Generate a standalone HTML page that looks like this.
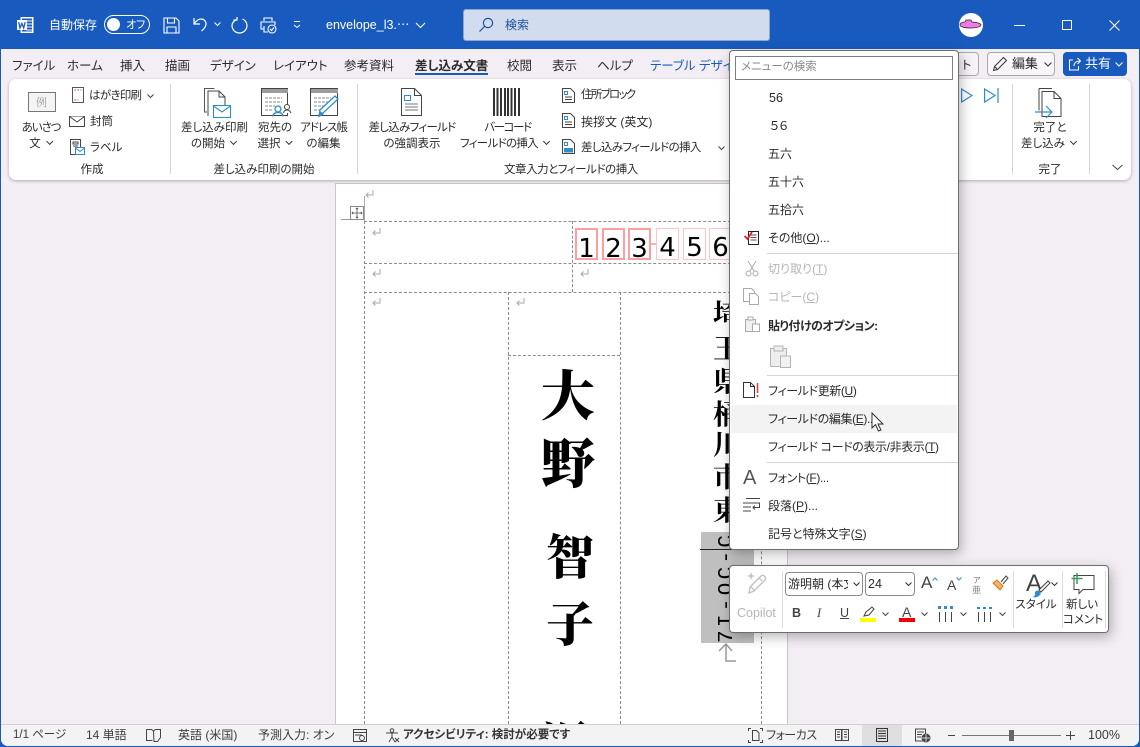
<!DOCTYPE html>
<html lang="ja"><head><meta charset="utf-8"><title>Word</title>
<style>
*{box-sizing:border-box}
html,body{margin:0;padding:0;width:1140px;height:747px;overflow:hidden;background:#185abd}
body{position:relative;font-family:"Liberation Sans","Noto Sans CJK JP",sans-serif;font-size:12px;color:#2b2b2b;font-feature-settings:"palt"}
.a{position:absolute}
.t{position:absolute;white-space:nowrap;line-height:16px;height:16px}
.c{text-align:center;transform:translateX(-50%)}
svg{position:absolute;overflow:visible}
.w{color:#fff}
.tab{font-size:12.5px;top:58px}
.rb{font-size:11.5px}
.m{font-size:12px;left:768px;color:#2b2b2b}
.f{letter-spacing:-.38px}
.dis{color:#b5b5b5}
.sep{position:absolute;background:#d6d6d6;width:1px}
.ms{position:absolute;left:767px;width:191px;height:1px;background:#d4d4d4}
.d{position:absolute;border:0 dashed #8c8c8c}
.h{border-top-width:1px}.v{border-left-width:1px}
.box{position:absolute;top:228px;width:23px;height:32px;font-family:"DejaVu Sans",sans-serif;font-size:26px;line-height:38px;text-align:center;color:#000;background:#fff}
.cal{position:absolute;font-family:"Noto Serif CJK SC","Noto Serif CJK JP",serif;font-weight:900;color:#000;line-height:1;white-space:nowrap}
.s{font-size:12px;top:727px;color:#3c3c3c}
.ch{display:inline-block;width:5px;height:5px;border-right:1px solid #333;border-bottom:1px solid #333;transform:rotate(45deg);margin:0 1px 3px 6px}
</style></head><body>

<!-- window background -->
<div class="a" style="left:1px;top:49px;width:1138px;height:697px;background:#f3edf4;border-radius:0 0 7px 7px"></div>

<!-- document page -->
<div class="a" style="left:335px;top:183px;width:453px;height:541px;background:#fff;border:1px solid #c9c6ca;border-bottom:0"></div>

<!-- title bar -->
<svg style="left:16px;top:16px" width="18" height="18" viewBox="0 0 18 18"><rect x="4.5" y="1" width="13" height="16" fill="#fff"/><rect x="6" y="2.5" width="10" height="13" fill="#185abd"/><path d="M10 5h6M10 8h6M10 11h6M10 14h6" stroke="#fff"/><rect x="1" y="4" width="10" height="10" fill="#fff"/><path d="M2.7 6l1.3 6 1.900-4.600L7.700 12 9.200 6" fill="none" stroke="#185abd" stroke-width="1.300"/></svg>
<div class="t w" style="left:49px;top:17px;font-size:12px">自動保存</div>
<div class="a" style="left:104px;top:15px;width:46px;height:19px;border:1px solid #fff;border-radius:10px"></div>
<div class="a" style="left:107px;top:18px;width:13px;height:13px;background:#fff;border-radius:50%"></div>
<div class="t w" style="left:126px;top:17px;font-size:11px">オフ</div>
<svg style="left:163px;top:17px" width="17" height="17" fill="none" stroke="#fff" stroke-width="1.100"><path d="M1 1h12l3 3v12H1z"/><path d="M4.500 1v5h7V1M4 16v-6h9v6"/></svg>
<svg style="left:192px;top:16px" width="18" height="18" fill="none" stroke="#fff" stroke-width="1.200"><path d="M2 2v6h6"/><path d="M2 8c2-3 4-5 7-5 3 0 5 2.200 5 5s-2 5-4.500 7"/></svg>
<svg style="left:214px;top:22px" width="7" height="5" fill="none" stroke="#fff"><path d="M.5.500L3.500 3.500 6.500.5"/></svg>
<svg style="left:231px;top:16px" width="18" height="18" fill="none" stroke="#fff" stroke-width="1.200"><path d="M6 3.500C3 4.500 1 7 1 9.500a7.500 7.500 0 0 0 15 0c0-3-2-5.500-4.500-6.500M6 1v3H2.500"/></svg>
<svg style="left:260px;top:17px" width="18" height="18" fill="none" stroke="#fff" stroke-width="1.100"><path d="M4 4V1h8v3M4 12H1V5h14v3M4 9v6h4"/><circle cx="12" cy="12" r="4" fill="#185abd"/><path d="M10 12l1.500 1.500L14 10.500"/></svg>
<svg style="left:293px;top:21px" width="8" height="8" fill="none" stroke="#fff"><path d="M1 .5h6M1 4L4 6.500 7 4"/></svg>
<div class="t w" style="left:326px;top:17px;font-size:12.500px">envelope_l3.⋯</div>
<svg style="left:415px;top:22px" width="11" height="7" fill="none" stroke="#fff" stroke-width="1.100"><path d="M1 1l4.500 4.500L10 1"/></svg>
<div class="a" style="left:463px;top:9px;width:307px;height:32px;background:#d1dcee;border:1px solid #8ea6c8;border-radius:3px"></div>
<svg style="left:478px;top:17px" width="16" height="16" fill="none" stroke="#1a4f9f" stroke-width="1.200"><circle cx="10" cy="6" r="4.600"/><path d="M6.500 9.500L1.500 14.500"/></svg>
<div class="t" style="left:505px;top:17px;font-size:12px;color:#1f4e96">検索</div>
<div class="a" style="left:959px;top:13px;width:24px;height:24px;border-radius:50%;background:#fff"></div>
<svg style="left:959px;top:13px" width="24" height="24"><path d="M1 12c0-2 2-3 5-3l1-2h5l1 2c5 .5 9 1.500 9 3s-4 3-10 3-11-1-11-3z" fill="#ee7ae6" stroke="#222" stroke-width=".7"/></svg>
<div class="a" style="left:1014px;top:25px;width:11px;height:1px;background:#fff"></div>
<div class="a" style="left:1062px;top:20px;width:10px;height:10px;border:1px solid #fff"></div>
<svg style="left:1109px;top:20px" width="11" height="11" stroke="#fff"><path d="M.5.5l10 10M10.500.5l-10 10"/></svg>

<!-- tabs -->
<div class="t tab" style="left:12px">ファイル</div>
<div class="t tab" style="left:67px">ホーム</div>
<div class="t tab" style="left:120px">挿入</div>
<div class="t tab" style="left:165px">描画</div>
<div class="t tab" style="left:210px">デザイン</div>
<div class="t tab" style="left:273px">レイアウト</div>
<div class="t tab" style="left:344px">参考資料</div>
<div class="t tab" style="left:415px;font-weight:bold">差し込み文書</div>
<div class="a" style="left:415px;top:73px;width:73px;height:2px;background:#185abd"></div>
<div class="t tab" style="left:507px">校閲</div>
<div class="t tab" style="left:552px">表示</div>
<div class="t tab" style="left:597px">ヘルプ</div>
<div class="t tab" style="left:650px;color:#185abd">テーブル デザイン</div>

<!-- right of tabs -->
<div class="a" style="left:940px;top:52px;width:39px;height:24px;background:#f6f2f7;border:1px solid #a8a8a8;border-radius:4px"></div>
<div class="t" style="left:962px;top:57px;font-size:12px">ト</div>
<div class="a" style="left:987px;top:52px;width:68px;height:24px;background:#f8f6f9;border:1px solid #a8a8a8;border-radius:4px"></div>
<svg style="left:992px;top:56px" width="16" height="16" fill="none" stroke="#333"><path d="M1.500 14.500l1-4L11.500 1.500l3 3-9 9zM2.500 10.500l3 3"/></svg>
<div class="t" style="left:1012px;top:56px;font-size:13px">編集</div>
<svg style="left:1044px;top:62px" width="8" height="5" fill="none" stroke="#333"><path d="M.5.500L4 4 7.500.5"/></svg>
<div class="a" style="left:1063px;top:52px;width:64px;height:24px;background:#185abd;border-radius:4px"></div>
<svg style="left:1068px;top:57px" width="14" height="14" fill="none" stroke="#fff"><path d="M5 3H1.500v10h9V9M6 9c0-3 2-5 6-5M9.500 1L12.500 4l-3 3"/></svg>
<div class="t w" style="left:1085px;top:56px;font-size:13px">共有</div>
<svg style="left:1115px;top:62px" width="8" height="5" fill="none" stroke="#fff"><path d="M.5.500L4 4 7.500.5"/></svg>

<!-- ribbon -->
<div class="a" style="left:9px;top:79px;width:1122px;height:101px;background:#fff;border-radius:7px;box-shadow:0 1px 3px rgba(0,0,0,.28)"></div>
<div class="sep" style="left:170px;top:84px;height:90px"></div>
<div class="sep" style="left:357px;top:84px;height:90px"></div>
<div class="sep" style="left:1012px;top:84px;height:90px"></div>
<div class="sep" style="left:1089px;top:84px;height:90px"></div>

<!-- ribbon group 1 -->
<div class="a" style="left:28px;top:92px;width:28px;height:20px;background:#f4f4f4;border:1px solid #777"></div>
<div class="t" style="left:36px;top:94px;font-size:11px;color:#999;font-family:'Noto Serif CJK JP',serif">例</div>
<div class="t rb c" style="left:41px;top:120px;letter-spacing:-1.100px">あいさつ</div>
<div class="t rb c" style="left:41px;top:136px">文<span class="ch"></span></div>
<svg style="left:72px;top:87px" width="12" height="16"><rect x=".5" y=".5" width="11" height="15" fill="#fff" stroke="#555"/><path d="M2.500 3h7M2.500 13h4" stroke="#d33" stroke-dasharray="1.500 1.500"/></svg>
<div class="t rb" style="left:89px;top:88px;letter-spacing:-.7px">はがき印刷</div>
<svg style="left:147px;top:94px" width="7" height="5" fill="none" stroke="#444"><path d="M.5.500L3.500 3.500 6.500.5"/></svg>
<svg style="left:69px;top:116px" width="16" height="11" fill="#fff" stroke="#444"><rect x=".5" y=".5" width="15" height="10"/><path d="M.5.500L8 6 15.500.500"/></svg>
<div class="t rb" style="left:90px;top:114px">封筒</div>
<svg style="left:70px;top:139px" width="15" height="16" fill="none"><rect x=".5" y=".5" width="10" height="15" stroke="#444"/><path d="M3 3h5v2H3zM3 7h5" stroke="#444"/><rect x="5.500" y="8.500" width="9" height="7" fill="#fff" stroke="#2e8ecb"/><path d="M5.500 9l4.500 3.500L14.500 9" stroke="#2e8ecb"/></svg>
<div class="t rb" style="left:90px;top:140px">ラベル</div>
<div class="t rb c" style="left:92px;top:162px">作成</div>

<!-- group 2 -->
<svg style="left:204px;top:88px" width="28" height="30" fill="none"><path d="M3 24H.5V.5h10" stroke="#555"/><path d="M4 28V3h11l6 6v13" fill="#fff" stroke="#444"/><path d="M15 3v6h6" stroke="#444"/><rect x="9.500" y="17.500" width="17" height="12" fill="#fff" stroke="#2e8ecb" stroke-width="1.100"/><path d="M9.500 18l8.500 6 8.500-6" stroke="#2e8ecb" stroke-width="1.100"/></svg>
<div class="t rb c" style="left:214.500px;top:120px">差し込み印刷</div>
<div class="t rb c" style="left:214px;top:136px">の開始<span class="ch"></span></div>
<svg style="left:261px;top:88px" width="31" height="29" fill="none"><rect x=".5" y=".5" width="26" height="27" fill="#fff" stroke="#444"/><rect x="1" y="1" width="26" height="4" fill="#9d9d9d"/><path d="M4 10h17M4 14h17M4 18h10M4 22h8" stroke="#888" stroke-dasharray="3 1"/><circle cx="17" cy="21" r="3" fill="#fff" stroke="#2e8ecb" stroke-width="1.300"/><path d="M12 28.500c0-3 2-4 5-4s5 1 5 4" stroke="#2e8ecb" stroke-width="1.300"/><circle cx="26" cy="19" r="2.500" fill="#fff" stroke="#444"/><path d="M22.500 25c.5-2 2-3 3.500-3s3 1 4 3" stroke="#444" fill="#fff"/></svg>
<div class="t rb c" style="left:275px;top:120px">宛先の</div>
<div class="t rb c" style="left:275px;top:136px">選択<span class="ch"></span></div>
<svg style="left:310px;top:88px" width="30" height="30" fill="none"><rect x=".5" y=".5" width="27" height="27" fill="#fff" stroke="#444"/><rect x="1" y="1" width="27" height="4" fill="#9d9d9d"/><path d="M4 10h17M4 14h15M4 18h10M4 22h8" stroke="#888" stroke-dasharray="3 1"/><path d="M9 28l1-6L25 8l3 3-15 14z" fill="#fff" stroke="#2e8ecb" stroke-width="1.300"/><path d="M9 29l1-6 4 3z" fill="#2e8ecb"/></svg>
<div class="t rb c" style="left:323.500px;top:120px;letter-spacing:-1px">アドレス帳</div>
<div class="t rb c" style="left:323.500px;top:136px">の編集</div>
<div class="t rb c" style="left:264px;top:162px">差し込み印刷の開始</div>

<!-- group 3 -->
<svg style="left:401px;top:88px" width="21" height="29" fill="none"><path d="M.5.500h13l7 7v20H.5z" fill="#fff" stroke="#444"/><path d="M13.500.5v7h7" stroke="#444"/><rect x="3.500" y="7.500" width="6" height="5" stroke="#2e8ecb"/><path d="M4 16h13M4 19h13M4 22h13" stroke="#777"/></svg>
<div class="t rb c" style="left:412px;top:120px;letter-spacing:-.7px">差し込みフィールド</div>
<div class="t rb c" style="left:412px;top:136px">の強調表示</div>
<svg style="left:493px;top:88px" width="28" height="28"><path d="M1 0v28M4.500 0v28M8 0v28M12 0v28M15 0v28M18.500 0v28M22 0v28M26 0v28" stroke="#333" stroke-width="2"/><path d="M3 21v7M10 24v4M20 22v6" stroke="#fff" stroke-width="1"/></svg>
<div class="t rb c" style="left:507.500px;top:120px;letter-spacing:-1.400px">バーコード</div>
<div class="t rb c" style="left:505px;top:136px;letter-spacing:-.7px">フィールドの挿入<span class="ch"></span></div>
<svg style="left:562px;top:88px" width="13" height="15" fill="none" stroke="#444"><path d="M.5.500h8l4 4v10H.5z" fill="#fff"/><rect x="2.500" y="3.500" width="3" height="3" stroke="#2e8ecb"/><path d="M3 9h7M3 11.500h7"/></svg>
<div class="t rb" style="left:581px;top:87px;letter-spacing:-1.700px">住所ブロック</div>
<svg style="left:562px;top:113px" width="13" height="15" fill="none" stroke="#444"><path d="M.5.500h8l4 4v10H.5z" fill="#fff"/><rect x="2.500" y="3.500" width="3" height="3" stroke="#2e8ecb"/><path d="M3 9h7M3 11.500h7"/></svg>
<div class="t rb" style="left:581px;top:114px;font-size:12px">挨拶文 (英文)</div>
<svg style="left:562px;top:139px" width="13" height="15" fill="none" stroke="#444"><path d="M.5.500h8l4 4v10H.5z" fill="#fff"/><rect x="2.500" y="3.500" width="3" height="3" stroke="#2e8ecb"/><path d="M2.500 9.500h8v3.500h-8z" fill="#2e8ecb" stroke="#2e8ecb"/></svg>
<div class="t rb" style="left:581px;top:140px;letter-spacing:-.65px">差し込みフィールドの挿入</div>
<svg style="left:718px;top:146px" width="7" height="5" fill="none" stroke="#444"><path d="M.5.500L3.500 3.500 6.500.5"/></svg>
<div class="t rb" style="left:504px;top:162px;letter-spacing:-.45px">文章入力とフィールドの挿入</div>

<!-- next icons -->
<svg style="left:961px;top:88px" width="12" height="15" fill="none" stroke="#2e8ecb" stroke-width="1.200"><path d="M.6 1l10.400 6.500L.6 14z"/></svg>
<svg style="left:984px;top:88px" width="15" height="15" fill="none" stroke="#2e8ecb" stroke-width="1.200"><path d="M.6 1l10.400 6.500L.6 14zM14 0v15"/></svg>

<!-- group complete -->
<svg style="left:1034px;top:88px" width="28" height="30" fill="none"><path d="M5 .5h13M5 .5v22" stroke="#444"/><path d="M8 28.500V3.500h12l7 7v18z" fill="#fff" stroke="#444"/><path d="M20 3.500v7h7" stroke="#444"/><path d="M1 24h16M12 18l6 6-6 6" stroke="#2e8ecb" stroke-width="1.200"/></svg>
<div class="t rb c" style="left:1050px;top:120px">完了と</div>
<div class="t rb c" style="left:1049px;top:136px">差し込み<span class="ch"></span></div>
<div class="t rb c" style="left:1050px;top:162px">完了</div>
<svg style="left:1112px;top:164px" width="11" height="7" fill="none" stroke="#444"><path d="M.5 1L5.500 5.500 10.500 1"/></svg>

<!-- document content -->
<div class="a" style="left:364px;top:196px;height:25px;width:1px;background:#aaa"></div>
<svg style="left:365px;top:190px" width="9" height="8" fill="none" stroke="#a8a8a8"><path d="M8 0v5H1M3.500 2.500L1 5l2.500 2.500"/></svg>
<div class="a" style="left:341px;top:219px;width:10px;height:1px;background:#999"></div>
<div class="a" style="left:350px;top:206px;width:14px;height:14px;background:#fff;border:1px solid #888"></div>
<svg style="left:352px;top:208px" width="10" height="10" fill="none" stroke="#555" stroke-width=".8"><path d="M5 0v10M0 5h10M3.800 1.200L5 0l1.200 1.200M3.800 8.800L5 10l1.200-1.200M1.200 3.800L0 5l1.200 1.200M8.800 3.800L10 5 8.800 6.200"/></svg>

<div class="d h" style="left:364px;top:221px;width:397px"></div>
<div class="d h" style="left:364px;top:263px;width:397px"></div>
<div class="d h" style="left:364px;top:292px;width:397px"></div>
<div class="d h" style="left:508px;top:355px;width:112px"></div>
<div class="d v" style="left:364px;top:221px;height:503px"></div>
<div class="d v" style="left:572px;top:221px;height:71px"></div>
<div class="d v" style="left:508px;top:292px;height:432px"></div>
<div class="d v" style="left:620px;top:292px;height:432px"></div>
<div class="d v" style="left:761px;top:292px;height:432px"></div>
<svg style="left:372px;top:228px" width="9" height="8" fill="none" stroke="#a8a8a8"><path d="M8 0v5H1M3.500 2.500L1 5l2.500 2.500"/></svg>
<svg style="left:372px;top:269px" width="9" height="8" fill="none" stroke="#a8a8a8"><path d="M8 0v5H1M3.500 2.500L1 5l2.500 2.500"/></svg>
<svg style="left:580px;top:269px" width="9" height="8" fill="none" stroke="#a8a8a8"><path d="M8 0v5H1M3.500 2.500L1 5l2.500 2.500"/></svg>
<svg style="left:372px;top:298px" width="9" height="8" fill="none" stroke="#a8a8a8"><path d="M8 0v5H1M3.500 2.500L1 5l2.500 2.500"/></svg>
<svg style="left:516px;top:298px" width="9" height="8" fill="none" stroke="#a8a8a8"><path d="M8 0v5H1M3.500 2.500L1 5l2.500 2.500"/></svg>

<div class="a" style="left:650px;top:243px;width:8px;height:2px;background:#ffb0b0"></div>
<div class="box" style="left:575px;border:2px solid #ff9e9e">1</div>
<div class="box" style="left:602px;border:2px solid #ff9e9e">2</div>
<div class="box" style="left:628px;border:2px solid #ff9e9e">3</div>
<div class="box" style="left:656px;border:1px solid #ffc4c4">4</div>
<div class="box" style="left:683px;border:1px solid #ffc4c4">5</div>
<div class="box" style="left:709px;border:1px solid #ffc4c4">6</div>

<div class="cal" style="left:541px;top:366px;font-size:54px">大</div>
<div class="cal" style="left:541px;top:434px;font-size:54px">野</div>
<div class="cal" style="left:546px;top:530px;font-size:48px">智</div>
<div class="cal" style="left:546px;top:597px;font-size:48px">子</div>
<div class="cal" style="left:541px;top:718px;font-size:50px;height:6px;overflow:hidden">湯</div>

<div class="cal" style="left:713px;top:299px;font-size:28px;font-weight:700">埼</div>
<div class="cal" style="left:713px;top:333px;font-size:28px;font-weight:700">玉</div>
<div class="cal" style="left:713px;top:366px;font-size:28px;font-weight:700">県</div>
<div class="cal" style="left:713px;top:399px;font-size:28px;font-weight:700">桶</div>
<div class="cal" style="left:713px;top:429px;font-size:28px;font-weight:700">川</div>
<div class="cal" style="left:713px;top:462px;font-size:28px;font-weight:700">市</div>
<div class="cal" style="left:713px;top:495px;font-size:28px;font-weight:700">東</div>

<div class="a" style="left:701px;top:532px;width:53px;height:111px;background:#bfbfbf"></div>
<div class="a" style="left:700px;top:549px;width:53px;height:1px;background:#222"></div>
<div class="a" style="left:672px;top:575px;width:112px;height:24px;line-height:24px;font-family:'Liberation Mono',monospace;font-size:21px;color:#000;transform:rotate(-90deg);white-space:nowrap;letter-spacing:3.300px;text-align:left">7I-OC-C</div>
<svg style="left:718px;top:643px" width="19" height="20" fill="none" stroke="#999" stroke-width="1.500"><path d="M1 8l7-7 6 7M8 1v17h10"/></svg>

<!-- context menu -->
<div class="a" style="left:729px;top:50px;width:230px;height:500px;background:#fff;border:1px solid #6d6d6d;border-radius:4px;box-shadow:2px 4px 12px rgba(0,0,0,.28)"></div>
<div class="a" style="left:735px;top:56px;width:218px;height:24px;border:1px solid #7f7f7f"></div>
<div class="t" style="left:741px;top:59px;font-size:11.500px;color:#8a8a8a">メニューの検索</div>
<div class="t m" style="top:90px;font-size:12.500px;left:769px">56</div>
<div class="t m" style="top:118px;left:770px">５６</div>
<div class="t m" style="top:146px">五六</div>
<div class="t m" style="top:174px">五十六</div>
<div class="t m" style="top:202px">五拾六</div>
<svg style="left:744px;top:229px" width="16" height="16" fill="none"><rect x="4.500" y="2.500" width="10" height="13" fill="#fff" stroke="#222"/><path d="M6.500 6h6M6.500 8.500h6M6.500 11h6" stroke="#555"/><path d="M.5 7l3 3L8 3" stroke="#d9222a" stroke-width="1.800"/></svg>
<div class="t m" style="top:230px">その他(<u>O</u>)...</div>
<div class="ms" style="top:253px"></div>
<svg style="left:745px;top:260px" width="14" height="17" fill="none" stroke="#aaa"><path d="M3 1l6 10M11 1L5 11"/><circle cx="3.500" cy="13.500" r="2.500"/><circle cx="10.500" cy="13.500" r="2.500"/></svg>
<div class="t m dis" style="top:261px">切り取り(<u>T</u>)</div>
<svg style="left:743px;top:288px" width="17" height="17" fill="#fff" stroke="#aaa"><path d="M.5.500h8l3 3v10H.5z"/><path d="M6.500 5.500h6l3 3v8h-9z"/></svg>
<div class="t m dis" style="top:289px">コピー(<u>C</u>)</div>
<svg style="left:745px;top:316px" width="15" height="16" fill="#fff" stroke="#aaa"><rect x=".5" y="3.500" width="10" height="12" fill="#f0f0f0"/><rect x="3" y="1" width="5" height="3"/><rect x="7.500" y="8" width="7" height="7.500"/></svg>
<div class="t m f" style="top:318px;font-weight:bold;letter-spacing:-.5px">貼り付けのオプション:</div>
<svg style="left:770px;top:345px" width="21" height="23" stroke="#b4b4b4"><rect x=".5" y="3.500" width="16" height="18" fill="#eee"/><rect x="4" y="1" width="9" height="5" fill="#eee"/><rect x="10.500" y="11" width="10" height="11.500" fill="#f2f2f2"/></svg>
<div class="ms" style="top:375px"></div>
<svg style="left:743px;top:382px" width="17" height="17" fill="#fff"><path d="M.5.500h7l4 4v11H.5z" stroke="#333"/><path d="M7.500.5v4h4" fill="none" stroke="#333"/><path d="M14.500 1v10" stroke="#e0383d" stroke-width="1.500"/><rect x="13.700" y="13" width="1.600" height="2" fill="#e0383d"/></svg>
<div class="t m f" style="top:383px">フィールド更新(<u>U</u>)</div>
<div class="a" style="left:731px;top:405px;width:226px;height:28px;background:#f3f3f3"></div>
<div class="t m f" style="top:411px">フィールドの編集(<u>E</u>)...</div>
<svg style="left:871px;top:412px" width="13" height="21"><path d="M1 1v15l3.500-3.500 3 6.500 2.500-1-3-6h5z" fill="#fff" stroke="#222" stroke-width=".9"/></svg>
<div class="t m f" style="top:439px">フィールド コードの表示/非表示(<u>T</u>)</div>
<div class="ms" style="top:462px"></div>
<div class="t" style="left:743px;top:466px;height:24px;line-height:24px;font-size:20px;color:#555">A</div>
<div class="t m f" style="top:470px">フォント(<u>F</u>)...</div>
<svg style="left:743px;top:497px" width="17" height="15" fill="none" stroke="#444"><path d="M3 1.500h14M0 6h17M0 10h8M0 14h8M16.500 6v4.500H10M12 8.500l-2 2 2 2"/></svg>
<div class="t m" style="top:498px">段落(<u>P</u>)...</div>
<div class="t m" style="top:526px">記号と特殊文字(<u>S</u>)</div>

<!-- mini toolbar -->
<div class="a" style="left:729px;top:565px;width:380px;height:68px;background:#fff;border:1px solid #6d6d6d;border-radius:4px;box-shadow:2px 4px 12px rgba(0,0,0,.28)"></div>
<svg style="left:746px;top:572px" width="24" height="22" fill="none" stroke="#c2c2c2" stroke-width="1.400"><path d="M3 21l1-6L15 4c2-2 6 1 4 4L8 19z"/><path d="M5 15l3 3M13 6l3 3"/><path d="M5 0l1 3 3 1-3 1-1 3-1-3-3-1 3-1z" fill="#c2c2c2" stroke="none"/></svg>
<div class="t" style="left:737px;top:605px;font-size:12.500px;color:#b5b5b5">Copilot</div>
<div class="sep" style="left:782px;top:571px;height:57px;background:#ddd"></div>
<div class="a" style="left:785px;top:572px;width:78px;height:24px;border:1px solid #8a8a8a;border-radius:4px"></div>
<div class="t" style="left:788px;top:576px;font-size:12px;width:60px;overflow:hidden">游明朝 (本文</div>
<svg style="left:853px;top:582px" width="7" height="5" fill="none" stroke="#333"><path d="M.5.500L3.500 3.500 6.500.5"/></svg>
<div class="a" style="left:865px;top:572px;width:50px;height:24px;border:1px solid #8a8a8a;border-radius:4px"></div>
<div class="t" style="left:868px;top:576px;font-size:12.500px">24</div>
<svg style="left:905px;top:582px" width="7" height="5" fill="none" stroke="#333"><path d="M.5.500L3.500 3.500 6.500.5"/></svg>
<div class="t" style="left:921px;top:575px;font-size:17px;color:#444">A</div>
<svg style="left:932px;top:577px" width="6" height="4" fill="none" stroke="#2e8ecb"><path d="M.5 3.500L3 1l2.500 2.500"/></svg>
<div class="t" style="left:947px;top:577px;font-size:14px;color:#444">A</div>
<svg style="left:956px;top:577px" width="6" height="4" fill="none" stroke="#2e8ecb"><path d="M.5.500L3 3 5.500.500"/></svg>
<div class="t" style="left:973px;top:573px;font-size:8px;color:#777">ア</div>
<div class="t" style="left:972px;top:582px;font-size:9px;color:#888">亜</div>
<svg style="left:992px;top:575px" width="17" height="17" fill="none"><path d="M1 8l7 7 3-4-6-6z" fill="#f3b26b" stroke="#d87a1e"/><path d="M9 7l5-6 2 2-5 6" stroke="#444"/></svg>
<div class="t" style="left:792px;top:605px;font-size:12.500px;font-weight:bold;color:#444">B</div>
<div class="t" style="left:817px;top:605px;font-size:12.500px;font-style:italic;color:#444;font-family:'Liberation Serif',serif">I</div>
<div class="t" style="left:840px;top:605px;font-size:12.500px;color:#444;text-decoration:underline">U</div>
<svg style="left:862px;top:606px" width="14" height="12" fill="none" stroke="#444"><path d="M2 10l2-4 6-5 2 2-5 6z"/></svg>
<div class="a" style="left:860px;top:618px;width:16px;height:4px;background:#ffff00"></div>
<svg style="left:882px;top:612px" width="7" height="5" fill="none" stroke="#444"><path d="M.5.500L3.500 3.500 6.500.5"/></svg>
<div class="t" style="left:902px;top:604px;font-size:14px;color:#444">A</div>
<div class="a" style="left:899px;top:618px;width:16px;height:4px;background:#f00000"></div>
<svg style="left:921px;top:612px" width="7" height="5" fill="none" stroke="#444"><path d="M.5.500L3.500 3.500 6.500.5"/></svg>
<svg style="left:938px;top:606px" width="15" height="16"><path d="M0 0h3v3H0zM6 0h3v3H6zM12 0h3v3h-3z" fill="#2e8ecb"/><path d="M1.500 6v10M7.500 6v10M13.500 6v10" stroke="#444"/></svg>
<svg style="left:960px;top:612px" width="7" height="5" fill="none" stroke="#444"><path d="M.5.500L3.500 3.500 6.500.5"/></svg>
<svg style="left:977px;top:606px" width="15" height="16"><path d="M0 1h3v2H0zM6 1h3v2H6zM12 1h3v2h-3z" fill="#2e8ecb"/><path d="M1.500 6v10M7.500 6v10M13.500 6v10" stroke="#444"/></svg>
<svg style="left:999px;top:612px" width="7" height="5" fill="none" stroke="#444"><path d="M.5.500L3.500 3.500 6.500.5"/></svg>
<div class="sep" style="left:1013px;top:571px;height:57px;background:#ddd"></div>
<div class="t" style="left:1026px;top:571px;height:26px;line-height:26px;font-size:24px;color:#444">A</div>
<svg style="left:1032px;top:580px" width="19" height="18"><path d="M7 10L16 1l2 2L9 12z" fill="#fff" stroke="#444"/><path d="M0 17c3 0 3-2 3-4 0-2 2-3 4-2 2 1 2 3 1 4-2 2-4 3-8 2z" fill="#2e8ecb"/></svg>
<svg style="left:1051px;top:582px" width="7" height="5" fill="none" stroke="#333"><path d="M.5.500L3.500 3.500 6.500.5"/></svg>
<div class="t c" style="left:1036px;top:597px;font-size:11.500px">スタイル</div>
<div class="sep" style="left:1062px;top:571px;height:57px;background:#ddd"></div>
<svg style="left:1071px;top:573px" width="24" height="22" fill="none"><path d="M3 2.500h20v14H12l-4 4v-4H3z" fill="#fff" stroke="#444"/><path d="M6 0v11M.5 5.500h11" stroke="#2ea44f" stroke-width="1.500"/></svg>
<div class="t c" style="left:1082px;top:597px;font-size:11.500px">新しい</div>
<div class="t c" style="left:1083px;top:612px;font-size:11.500px">コメント</div>
<div class="sep" style="left:1105px;top:571px;height:57px;background:#ddd"></div>

<!-- status bar -->
<div class="a" style="left:1px;top:724px;width:1138px;height:22px;background:#f3f3f3;border-top:1px solid #d0d0d0;border-radius:0 0 7px 7px"></div>
<div class="t s" style="left:13px;font-size:11.500px">1/1 ページ</div>
<div class="t s" style="left:86px">14 単語</div>
<svg style="left:146px;top:729px" width="15" height="13" fill="none" stroke="#444"><path d="M.5.500h5l2 1.500 2-1.500h5v8l-3 4H8L7.500 2M.5.500v11h6"/></svg>
<div class="t s" style="left:178px">英語 (米国)</div>
<div class="t s" style="left:258px">予測入力: オン</div>
<svg style="left:353px;top:729px" width="14" height="13" fill="none" stroke="#444"><rect x=".5" y=".5" width="13" height="12"/><path d="M.5 3.500h13M2 6h7"/><circle cx="9" cy="9" r="2.500"/></svg>
<svg style="left:385px;top:728px" width="15" height="15" fill="none" stroke="#444"><circle cx="7" cy="2.500" r="1.800"/><path d="M1 5h12M7 5v4l-3 5M7 9l3 5M10 10l4 4M14 10l-4 4"/></svg>
<div class="t s" style="left:403px;font-weight:bold;font-size:11.500px;color:#333">アクセシビリティ: 検討が必要です</div>
<svg style="left:748px;top:728px" width="15" height="15" fill="none" stroke="#444"><path d="M.5 3V.5H3M12 .5h2.500V3M.5 12v2.500H3M12 14.500h2.500V12"/><path d="M4.500 2.500h4l2.500 2.500v7.500H4.500z"/></svg>
<div class="t s" style="left:766px;letter-spacing:-.5px">フォーカス</div>
<svg style="left:835px;top:728px" width="14" height="14" fill="none" stroke="#444"><path d="M.5 1.500h6v11h-6zM7 1.500h6.500v11H7zM2 4h3M2 6.500h3M2 9h3M9 4h3M9 6.500h3M9 9h3"/></svg>
<div class="a" style="left:862px;top:725px;width:40px;height:21px;background:#dedede"></div>
<svg style="left:876px;top:728px" width="12" height="14" fill="none" stroke="#333"><rect x=".5" y=".5" width="11" height="13"/><path d="M2 3h8M2 5.500h8M2 8h8M2 10.500h8"/></svg>
<svg style="left:915px;top:728px" width="16" height="15" fill="none" stroke="#444"><path d="M.5 1h10v12h-10zM2 4h7M2 6.500h5M2 9h4"/><circle cx="11" cy="10" r="4" fill="#444"/><path d="M7 10h8M11 6v8" stroke="#fff" stroke-width=".7"/></svg>
<div class="a" style="left:948px;top:735px;width:7px;height:1px;background:#444"></div>
<div class="a" style="left:962px;top:735px;width:99px;height:1px;background:#777"></div>
<div class="a" style="left:1009px;top:730px;width:5px;height:11px;background:#666"></div>
<div class="a" style="left:1066px;top:735px;width:9px;height:1px;background:#444"></div>
<div class="a" style="left:1070px;top:731px;width:1px;height:9px;background:#444"></div>
<div class="t s" style="left:1088px;font-size:12.500px">100%</div>
</body></html>
